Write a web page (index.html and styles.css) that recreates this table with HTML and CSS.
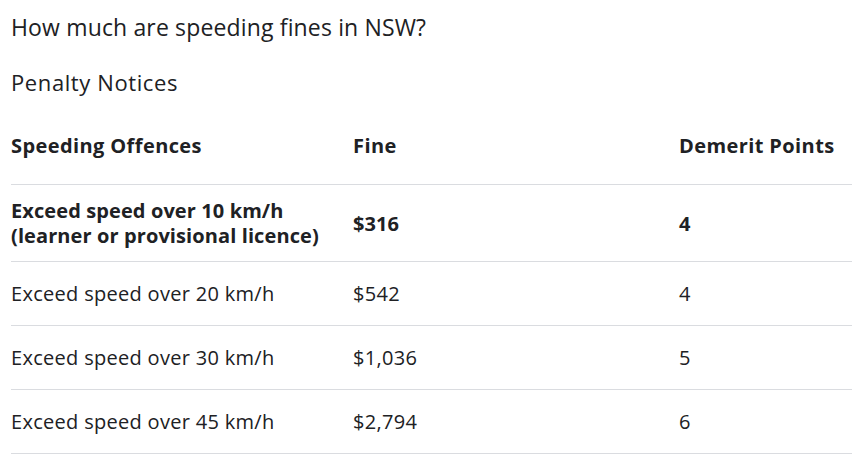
FILE: index.html
```html
<!DOCTYPE html>
<html lang="en">
<head>
<meta charset="utf-8">
<title>How much are speeding fines in NSW?</title>
<link rel="stylesheet" href="styles.css">
</head>
<body>
<div class="page">
  <div class="title">How much are speeding fines in NSW?</div>
  <div class="subtitle">Penalty Notices</div>
  <div class="table">
    <div class="row head">
      <div class="cell">Speeding Offences</div>
      <div class="cell">Fine</div>
      <div class="cell">Demerit Points</div>
    </div>
    <div class="row first">
      <div class="cell">Exceed speed over 10 km/h<br>(learner or provisional licence)</div>
      <div class="cell">$316</div>
      <div class="cell">4</div>
    </div>
    <div class="row">
      <div class="cell">Exceed speed over 20 km/h</div>
      <div class="cell">$542</div>
      <div class="cell">4</div>
    </div>
    <div class="row">
      <div class="cell">Exceed speed over 30 km/h</div>
      <div class="cell">$1,036</div>
      <div class="cell">5</div>
    </div>
    <div class="row">
      <div class="cell">Exceed speed over 45 km/h</div>
      <div class="cell">$2,794</div>
      <div class="cell">6</div>
    </div>
  </div>
</div>
</body>
</html>
```
FILE: styles.css
```css
html, body {
  margin: 0;
  padding: 0;
  background: #ffffff;
}
body {
  font-family: "Open Sans", Roboto, "Liberation Sans", sans-serif;
  color: #202124;
}
.page {
  padding-left: 11px;
}
.title {
  font-size: 23px;
  letter-spacing: 0.15px;
  line-height: 28px;
  padding-top: 13px;
}
.subtitle {
  font-size: 22px;
  letter-spacing: 0.6px;
  line-height: 28px;
  padding-top: 27px;
}
.table {
  display: flex;
  flex-direction: column;
}
.row {
  display: grid;
  grid-template-columns: 342px 326px 1fr;
  align-items: center;
  box-sizing: border-box;
  height: 64px;
  border-bottom: 1px solid #dadce0;
  font-size: 20px;
  letter-spacing: 0.3px;
  line-height: 25px;
}
.row.head {
  height: 89px;
  align-items: start;
  padding-top: 37px;
  font-weight: 700;
  letter-spacing: 0.4px;
}
.row.first {
  height: 77px;
  font-weight: 700;
  letter-spacing: 0.1px;
}
```
